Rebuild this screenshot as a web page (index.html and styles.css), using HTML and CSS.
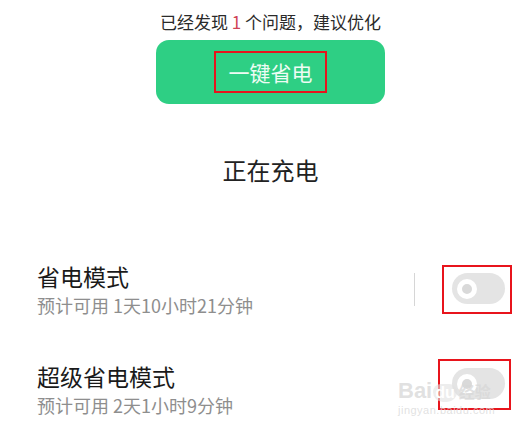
FILE: index.html
```html
<!DOCTYPE html>
<html lang="zh-CN">
<head>
    <meta charset="UTF-8">
    <meta name="viewport" content="width=device-width, initial-scale=1.0">
    <title>省电</title>
    <link rel="stylesheet" href="styles.css">
</head>
<body>

    <div class="page">
        <!-- 提示 -->
        <p class="hint">已经发现 <span class="num">1</span> 个问题，建议优化</p>

        <div class="action">
            <button class="btn-save"><span class="mark">一键省电</span></button>
        </div>

        <h2 class="status">正在充电</h2>

        <!-- 模式列表 -->
        <div class="mode-list">
            <div class="mode-item">
                <div class="mode-info">
                    <div class="mode-title">省电模式</div>
                    <div class="mode-desc">预计可用 1天10小时21分钟</div>
                </div>
                <span class="sep"></span>
                <div class="mark-box first">
                    <span class="switch"><span class="knob"></span></span>
                </div>
            </div>

            <div class="mode-item">
                <div class="mode-info">
                    <div class="mode-title">超级省电模式</div>
                    <div class="mode-desc">预计可用 2天1小时9分钟</div>
                </div>
                <div class="mark-box second">
                    <span class="switch"><span class="knob"></span></span>
                </div>
            </div>
        </div>

        <!-- 水印 -->
        <div class="watermark">
            <div class="wm-logo">Bai<span class="wm-paw">du</span><span class="wm-cn">经验</span></div>
            <div class="wm-url">jingyan.baidu.com</div>
        </div>
    </div>

</body>
</html>
```

FILE: styles.css
```css
        html, body {
            margin: 0;
            padding: 0;
            background: #fff;
            overflow: hidden;
        }
        body {
            font-family: "Noto Sans CJK SC", "Noto Sans", sans-serif;
            color: #222;
        }
        .page {
            position: relative;
            width: 521px;
            height: 430px;
        }
        .hint {
            margin: 0;
            padding: 10px 0 0 20px;
            text-align: center;
            font-size: 17px;
            line-height: 24px;
            color: #2a2a2a;
        }
        .hint .num {
            color: #cf4456;
        }
        .action {
            margin-top: 6px;
            padding-left: 20px;
            display: flex;
            justify-content: center;
        }
        .btn-save {
            width: 229px;
            height: 64px;
            border: none;
            border-radius: 13px;
            background: #2ecf84;
            display: flex;
            justify-content: center;
            align-items: center;
            padding: 0;
            cursor: pointer;
            font-family: inherit;
        }
        .btn-save .mark {
            display: block;
            width: 109px;
            height: 38px;
            border: 2px solid #e8141c;
            color: #eefcf4;
            font-size: 21px;
            line-height: 38px;
            text-align: center;
        }
        .status {
            margin: 50px 0 0;
            padding-left: 20px;
            text-align: center;
            font-size: 24px;
            font-weight: normal;
            line-height: 32px;
            color: #222;
        }
        .mode-list {
            margin-top: 75px;
            display: flex;
            flex-direction: column;
            gap: 43px;
        }
        .mode-item {
            display: flex;
            align-items: center;
            height: 57px;
            padding: 0 9px 0 37px;
        }
        .mode-info {
            flex: 1;
        }
        .mode-title {
            font-size: 23px;
            line-height: 30px;
            color: #1a1a1a;
        }
        .mode-desc {
            margin-top: 1px;
            font-size: 18px;
            line-height: 26px;
            color: #8e8e8e;
        }
        .sep {
            width: 1px;
            height: 33px;
            background: #d6d6d6;
        }
        .mark-box {
            border: 2px solid #e8141c;
            align-self: flex-start;
        }
        .mark-box.first {
            margin: 4px 0 0 27px;
            padding: 6px 5px 8px 8px;
        }
        .mark-box.second {
            margin: -2px 1px 0 0;
            padding: 7px 4px 9px 12px;
        }
        .switch {
            display: flex;
            align-items: center;
            width: 53px;
            height: 31px;
            padding-left: 5px;
            box-sizing: border-box;
            border-radius: 16px;
            background: #e4e4e4;
        }
        .knob {
            width: 10px;
            height: 10px;
            border: 5px solid #fff;
            border-radius: 50%;
            background: #d9d9d9;
        }
        .watermark {
            position: absolute;
            left: 398px;
            top: 378px;
            width: 100px;
            color: rgba(215, 215, 215, 0.75);
            font-family: "Liberation Sans", sans-serif;
            pointer-events: none;
        }
        .wm-logo {
            font-size: 22px;
            font-weight: bold;
            line-height: 26px;
            white-space: nowrap;
        }
        .wm-paw {
            display: inline-block;
            margin-left: 1px;
            padding: 0 2px;
            font-size: 16px;
            line-height: 18px;
            border-radius: 8px 8px 10px 10px;
            background: rgba(225, 225, 225, 0.6);
            color: #fff;
        }
        .wm-cn {
            margin-left: 2px;
            font-family: "Noto Sans CJK SC", sans-serif;
            font-size: 16px;
        }
        .wm-url {
            font-size: 11px;
            line-height: 13px;
            letter-spacing: 0.5px;
        }
```
